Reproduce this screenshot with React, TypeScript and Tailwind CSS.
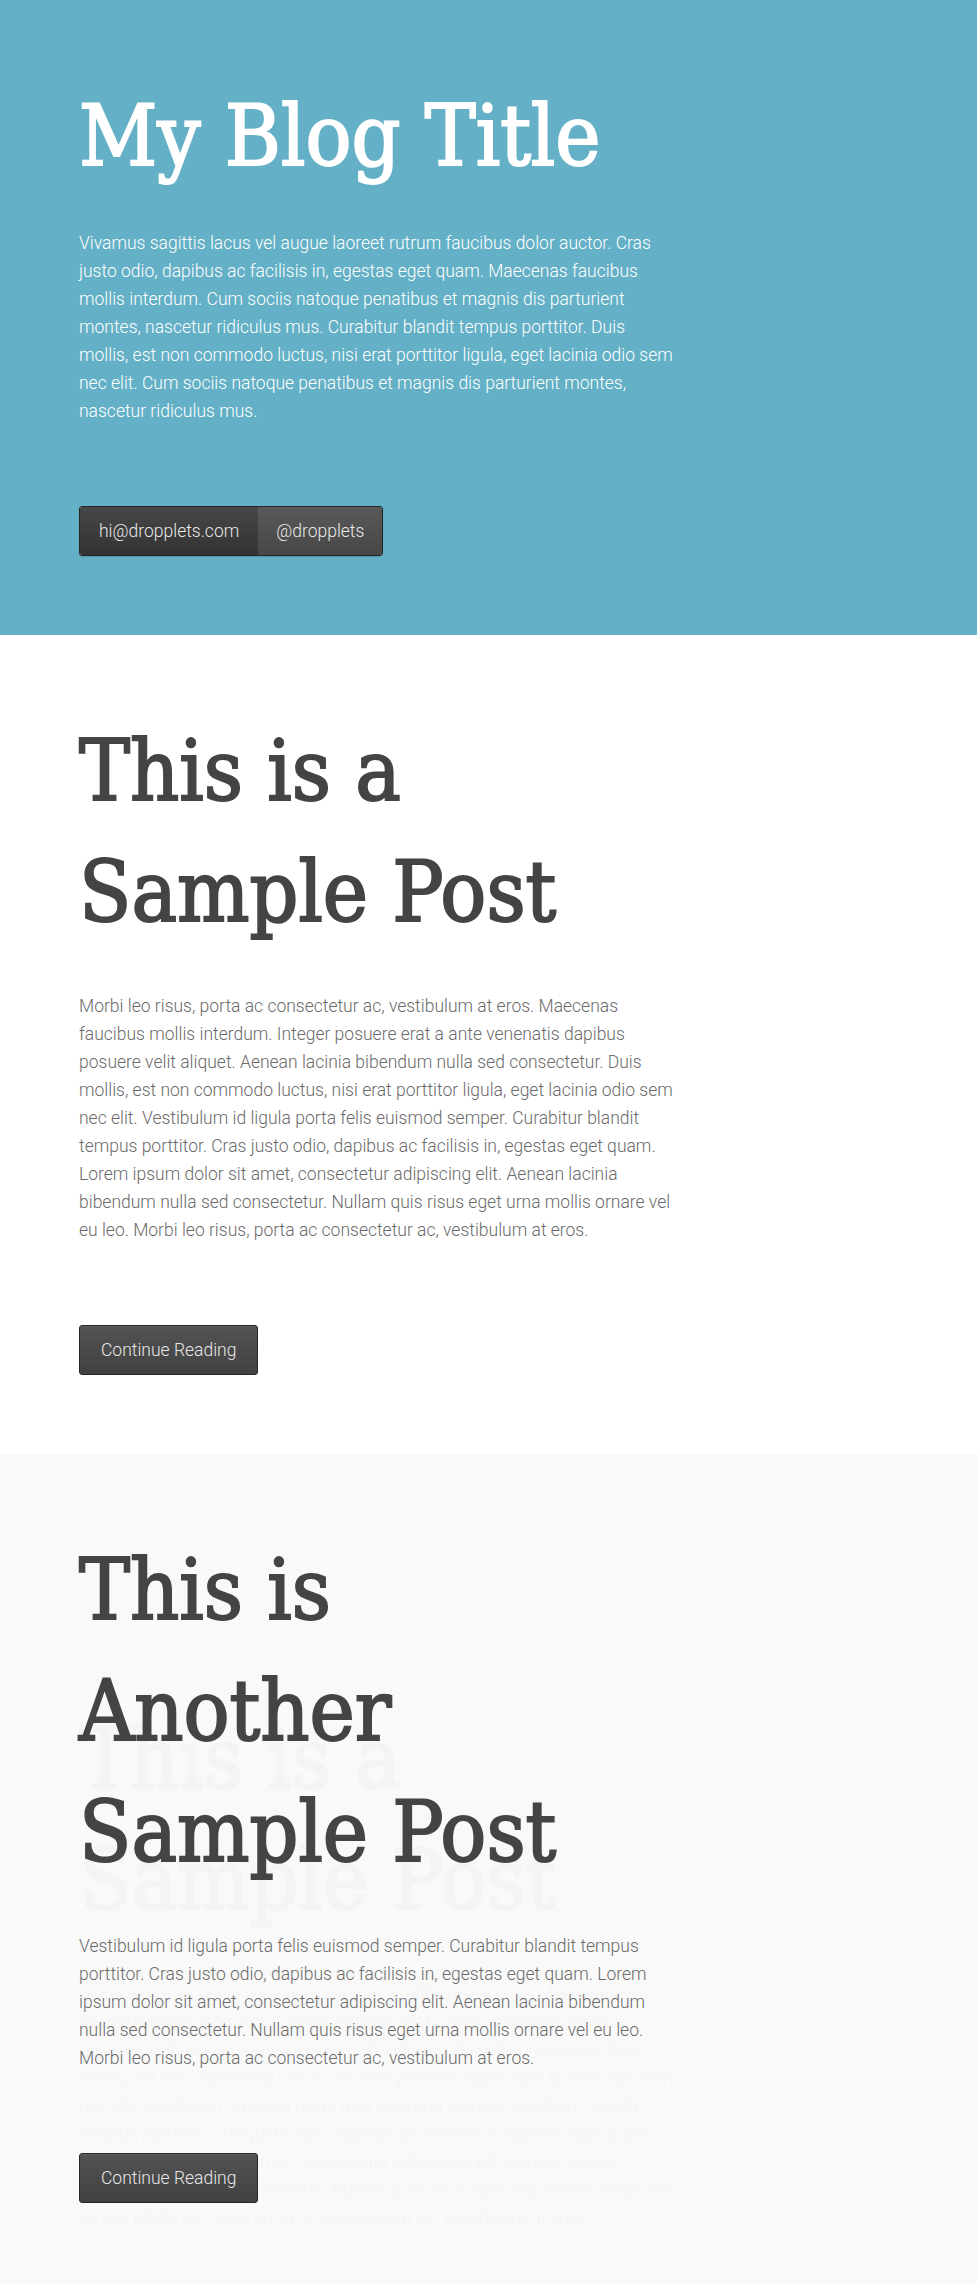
import React from "react";

const serif =
  "font-['DejaVu_Serif_Condensed','DejaVu_Serif',serif] font-stretch-condensed font-normal [-webkit-text-stroke:2px_currentColor]";
const sans = "font-['Roboto','Liberation_Sans',sans-serif] font-light";

const headerText =
  "Vivamus sagittis lacus vel augue laoreet rutrum faucibus dolor auctor. Cras justo odio, dapibus ac facilisis in, egestas eget quam. Maecenas faucibus mollis interdum. Cum sociis natoque penatibus et magnis dis parturient montes, nascetur ridiculus mus. Curabitur blandit tempus porttitor. Duis mollis, est non commodo luctus, nisi erat porttitor ligula, eget lacinia odio sem nec elit. Cum sociis natoque penatibus et magnis dis parturient montes, nascetur ridiculus mus.";

const post1Text =
  "Morbi leo risus, porta ac consectetur ac, vestibulum at eros. Maecenas faucibus mollis interdum. Integer posuere erat a ante venenatis dapibus posuere velit aliquet. Aenean lacinia bibendum nulla sed consectetur. Duis mollis, est non commodo luctus, nisi erat porttitor ligula, eget lacinia odio sem nec elit. Vestibulum id ligula porta felis euismod semper. Curabitur blandit tempus porttitor. Cras justo odio, dapibus ac facilisis in, egestas eget quam. Lorem ipsum dolor sit amet, consectetur adipiscing elit. Aenean lacinia bibendum nulla sed consectetur. Nullam quis risus eget urna mollis ornare vel eu leo. Morbi leo risus, porta ac consectetur ac, vestibulum at eros.";

const post2Text =
  "Vestibulum id ligula porta felis euismod semper. Curabitur blandit tempus porttitor. Cras justo odio, dapibus ac facilisis in, egestas eget quam. Lorem ipsum dolor sit amet, consectetur adipiscing elit. Aenean lacinia bibendum nulla sed consectetur. Nullam quis risus eget urna mollis ornare vel eu leo. Morbi leo risus, porta ac consectetur ac, vestibulum at eros.";

function ContinueButton() {
  return (
    <a
      href="#"
      className={`${sans} inline-block h-[50px] rounded-[3px] border border-[#262626] bg-linear-to-b from-[#535353] to-[#414141] px-[21px] text-[17.5px] leading-[48px] text-[#e8e8e8] shadow-[inset_0_1px_0_rgba(255,255,255,0.08)]`}
    >
      Continue Reading
    </a>
  );
}

function PostBody({ title, text }: { title: string; text: string }) {
  return (
    <>
      <h2 className={`${serif} max-w-[540px] text-[85px] leading-[121px] text-[#444444]`}>
        {title}
      </h2>
      <p className={`${sans} mt-[40px] max-w-[596px] text-[17.5px] leading-[28px] text-[#6a6a6a]`}>
        {text}
      </p>
    </>
  );
}

export default function App() {
  return (
    <div className="min-h-[2284px] w-full bg-[#f9f9f9]">
      <header className="bg-[#64b0c6] pb-[79px] pl-[79px] pr-[80px] pt-[75px]">
        <h1 className={`${serif} text-[85px] leading-[121px] text-white`}>My Blog Title</h1>
        <p className={`${sans} mt-[33px] max-w-[596px] text-[17.5px] leading-[28px] text-white`}>
          {headerText}
        </p>
        <div className="mt-[81px] inline-flex h-[50px] overflow-hidden rounded-[3px] border border-[#252525] shadow-[0_1px_1px_rgba(0,0,0,0.15)]">
          <a
            href="#"
            className={`${sans} bg-linear-to-b from-[#474747] to-[#333333] px-[19px] text-[17.5px] leading-[48px] text-[#e8e8e8]`}
          >
            hi@dropplets.com
          </a>
          <a
            href="#"
            className={`${sans} bg-linear-to-b from-[#595959] to-[#474747] px-[18px] text-[17.5px] leading-[48px] text-[#e8e8e8]`}
          >
            @dropplets
          </a>
        </div>
      </header>

      <article className="bg-white pb-[79px] pl-[79px] pr-[80px] pt-[75px]">
        <PostBody title="This is a Sample Post" text={post1Text} />
        <div className="mt-[81px]">
          <ContinueButton />
        </div>
      </article>

      <article className="relative overflow-hidden bg-[#f9f9f9] pb-[80px] pl-[79px] pr-[80px] pt-[75px]">
        <div
          aria-hidden="true"
          className="pointer-events-none absolute left-[79px] top-[244px] opacity-[0.025]"
        >
          <PostBody title="This is a Sample Post" text={post1Text} />
        </div>
        <div className="relative">
          <PostBody title="This is Another Sample Post" text={post2Text} />
          <div className="mt-[81px]">
            <ContinueButton />
          </div>
        </div>
      </article>
    </div>
  );
}
